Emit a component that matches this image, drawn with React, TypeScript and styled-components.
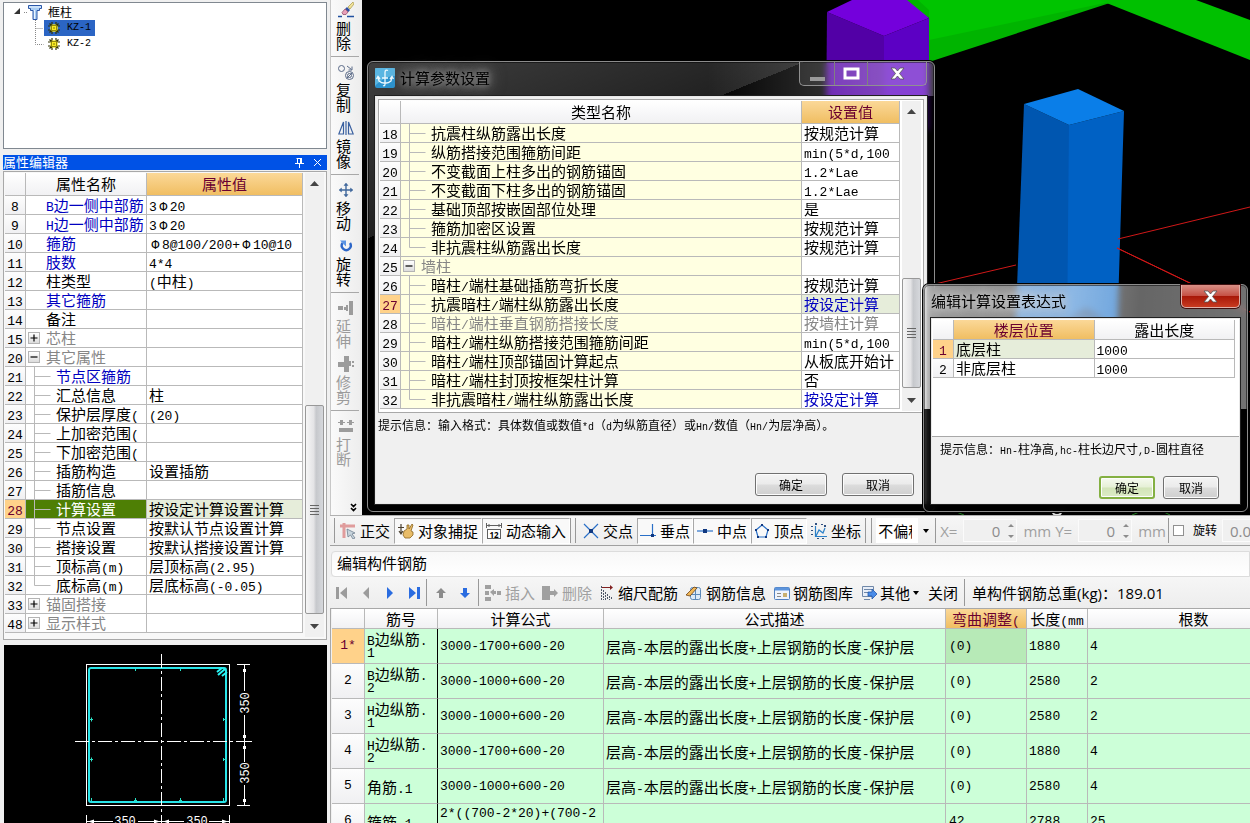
import React, { useState } from "react";
import styled, { createGlobalStyle, css } from "styled-components";

const SONG = `"Noto Sans CJK SC", sans-serif`;
const MONO = `"Liberation Mono", monospace`;
const YAHEI = `"Open Sans", "Noto Sans CJK SC", sans-serif`;
const LINE = "#b9b9b9";

const GlobalStyle = createGlobalStyle`
  *, *::before, *::after { box-sizing: border-box; }
  body { margin: 0; background: #f0f0f0; color: #000; font: 15px/18px ${SONG}; }
  button, input, select { font: inherit; color: inherit; margin: 0; }
`;

/* ---------- text ---------- */

const Latin = styled.span<{ $size: number }>`
  font-family: ${MONO};
  font-size: ${(p) => p.$size}px;
  line-height: 0;
`;

const Rebar = styled.span`
  display: inline-block;
  width: 13px;
  font-family: ${MONO};
  font-size: 13px;
  line-height: 0;
  text-align: center;
`;

const LATIN_SIZE: Record<number, number> = { 15: 13, 13: 11, 12: 10 };

/* Song-style text: ideographs fill the em, Latin letters take half of it. */
function Song({ children, size = 15 }: { children: string; size?: number }) {
  return (
    <>
      {children.split(/([\x20-\x7e]+|Φ)/).map((part, i) => {
        if (!part) return null;
        if (part === "Φ") return <Rebar key={i}>{part}</Rebar>;
        if (i % 2) return <Latin key={i} $size={LATIN_SIZE[size]}>{part}</Latin>;
        return part;
      })}
    </>
  );
}

/* ---------- page frame ---------- */

const Page = styled.div`
  display: flex;
  height: 100vh;
  overflow: hidden;
`;

const LeftDock = styled.aside`
  flex: none;
  display: flex;
  flex-direction: column;
  width: 330px;
  padding: 2px 3px 0 3px;
`;

const Main = styled.main`
  flex: 1;
  min-width: 0;
  display: flex;
  flex-direction: column;
`;

const Workspace = styled.div`
  flex: 1;
  min-height: 0;
  display: flex;
`;

/* ---------- component tree ---------- */

const TreePanel = styled.section`
  flex: none;
  height: 147px;
  padding: 1px 0 0 10px;
  background: #fff;
  border: 1px solid #808890;
  font-size: 12px;
  line-height: 16px;
`;

const TreeRoot = styled.div`
  display: flex;
  align-items: center;
  height: 16px;
`;

const TreeItem = styled.button<{ $selected?: boolean }>`
  display: flex;
  align-items: center;
  gap: 7px;
  width: 51px;
  height: 16px;
  padding: 0 0 0 4px;
  border: 0;
  background: ${(p) => (p.$selected ? "#2b65c4" : "transparent")};
`;

const TreeRow = styled.div`
  display: flex;
  height: 16px;
  padding-left: 21px;
`;

const RootLabel = styled.span`
  padding-left: 6px;
`;

const Gear = () => (
  <svg width="12" height="12" viewBox="0 0 12 12">
    <path d="M4 0v12M8 0v12M0 4h12M0 8h12M1.500 1.500l9 9M10.500 1.500l-9 9" stroke="#333300" strokeWidth="1.200" />
    <circle cx="6" cy="6" r="3.800" fill="#f8ea20" />
    <rect x="3.500" y="3.500" width="5" height="5" fill="none" stroke="#6a6000" strokeWidth=".7" />
    <rect x="5.400" y="5.400" width="1.200" height="1.200" fill="#5a5000" />
  </svg>
);

function ComponentTree() {
  return (
    <TreePanel>
      <TreeRoot>
        <svg width="28" height="16" viewBox="0 0 28 16">
          <path d="M6 4v6H0z" fill="#333" />
          <path d="M10 8.500h4" stroke="#888" strokeDasharray="1 1" />
          <path d="M14.500 1.500h13v3h-2v2h-2.500v9h-4v-9h-2.500v-2h-2z" fill="#a9cdf2" stroke="#2a56a8" />
          <path d="M15 3h12M20.500 6v9" stroke="#eaf4ff" />
        </svg>
        <RootLabel>框柱</RootLabel>
      </TreeRoot>
      {["KZ-1", "KZ-2"].map((name, i) => (
        <TreeRow key={name}>
          <svg width="9" height="16" viewBox="0 0 9 16">
            <path d={i ? "M.5 0v8.500h8" : "M.5 0v16M.5 8.500h8"} fill="none" stroke="#888" strokeDasharray="1 1" />
          </svg>
          <TreeItem type="button" $selected={i === 0}>
            <Gear />
            <Song size={12}>{name}</Song>
          </TreeItem>
        </TreeRow>
      ))}
    </TreePanel>
  );
}

/* ---------- grids ---------- */

const Grid = styled.table`
  flex: 1;
  width: 100%;
  min-width: 0;
  table-layout: fixed;
  border-collapse: separate;
  border-spacing: 0;
  align-self: flex-start;
`;

const HeadCell = styled.th<{ $hot?: boolean; $w?: number; $h?: number }>`
  width: ${(p) => (p.$w ? `${p.$w}px` : "auto")};
  height: ${(p) => p.$h ?? 23}px;
  padding: 0;
  overflow-x: clip;
  white-space: nowrap;
  font-weight: 400;
  text-align: center;
  color: ${(p) => (p.$hot ? "#6a0030" : "#000")};
  background: ${(p) => (p.$hot ? "linear-gradient(#fbd898, #f0be62)" : "linear-gradient(#fff, #f1f1f3)")};
  border-right: 1px solid ${LINE};
  border-bottom: 1px solid ${LINE};
`;

const NumCell = styled.th<{ $active?: boolean }>`
  padding: 0;
  font-weight: 400;
  text-align: center;
  color: ${(p) => (p.$active ? "#6a0030" : "#000")};
  background: ${(p) => (p.$active ? "#ffd28a" : "linear-gradient(#fdfdfd, #f0f0f2)")};
  border-right: 1px solid ${LINE};
  border-bottom: 1px solid ${LINE};
`;

type Tone = "normal" | "blue" | "gray" | "inverse";
const TONES: Record<Tone, string> = { normal: "#000", blue: "#0000c0", gray: "#868686", inverse: "#fff" };

const Cell = styled.td<{ $bg?: string; $tone?: Tone; $pad?: number }>`
  height: 19px;
  padding: 0 0 0 ${(p) => p.$pad ?? 0}px;
  overflow-x: clip;
  white-space: nowrap;
  line-height: 18px;
  color: ${(p) => TONES[p.$tone ?? "normal"]};
  background: ${(p) => p.$bg ?? "#fff"};
  border-right: 1px solid ${LINE};
  border-bottom: 1px solid ${LINE};
`;

const NameLine = styled.div`
  display: flex;
  align-items: center;
  height: 18px;
`;

const NameText = styled.span`
  white-space: nowrap;
`;

const Gutter = styled.svg<{ $leaf?: boolean }>`
  flex: none;
  width: ${(p) => (p.$leaf ? 30 : 20)}px;
  height: 18px;
  overflow: visible;
`;

const ExpandSlot = styled.span`
  flex: none;
  width: 20px;
  padding-left: 2px;
`;

const Expander = styled.button`
  display: block;
  width: 12px;
  height: 12px;
  padding: 0;
  border: 1px solid #b4b4b4;
  background: linear-gradient(#fff, #dcdcdc);
  svg { display: block; }
`;

type Branch = "none" | "mid" | "end" | "plus" | "minus";

function NameContent({ branch, text }: { branch: Branch; text: string }) {
  return (
    <NameLine>
      {branch === "plus" || branch === "minus" ? (
        <ExpandSlot>
          <Expander type="button" aria-label={branch === "plus" ? "展开" : "折叠"}>
            <svg width="10" height="10" viewBox="0 0 10 10">
              <path d={branch === "plus" ? "M1.500 5h7M5 1.500v7" : "M1.500 5h7"} stroke="#000" strokeWidth="1.200" />
            </svg>
          </Expander>
        </ExpandSlot>
      ) : (
        <Gutter $leaf={branch !== "none"}>
          {branch === "mid" && <path d="M8.500 0v19M8.500 9.500h16" stroke={LINE} fill="none" />}
          {branch === "end" && <path d="M8.500 0v9.500h16" stroke={LINE} fill="none" />}
        </Gutter>
      )}
      <NameText>
        <Song>{text}</Song>
      </NameText>
    </NameLine>
  );
}

/* ---------- scroll bar ---------- */

const Track = styled.div`
  flex: none;
  display: flex;
  flex-direction: column;
  width: 19px;
  margin: 0 2px;
  background: #f0f0f0;
`;

const ArrowButton = styled.button`
  flex: none;
  display: grid;
  place-items: center;
  height: 21px;
  padding: 0;
  border: 0;
  background: none;
`;

const TrackSpace = styled.div<{ $grow: number }>`
  flex: ${(p) => p.$grow} 0 0;
`;

const Thumb = styled.div<{ $grow: number }>`
  flex: ${(p) => p.$grow} 0 0;
  display: grid;
  place-items: center;
  border: 1px solid #989898;
  border-radius: 2px;
  background: linear-gradient(90deg, #f6f6f6, #e4e4e6 45%, #c6c8cc 60%, #d6d8dc);
`;

const Tri = ({ down }: { down?: boolean }) => (
  <svg width="9" height="5" viewBox="0 0 9 5">
    <path d={down ? "M0 0h9L4.500 5z" : "M0 5h9L4.500 0z"} fill="#444" />
  </svg>
);

function ScrollBar({ before, size, after }: { before: number; size: number; after: number }) {
  return (
    <Track>
      <ArrowButton type="button" aria-label="向上"><Tri /></ArrowButton>
      <TrackSpace $grow={before} />
      <Thumb $grow={size}>
        <svg width="9" height="11" viewBox="0 0 9 11">
          <path d="M0 1.500h9M0 4.500h9M0 7.500h9M0 10.500h9" stroke="#666" />
        </svg>
      </Thumb>
      <TrackSpace $grow={after} />
      <ArrowButton type="button" aria-label="向下"><Tri down /></ArrowButton>
    </Track>
  );
}

/* ---------- property editor ---------- */

const PropTitle = styled.header`
  flex: none;
  display: flex;
  height: 15px;
  margin-top: 6px;
  padding-right: 1px;
  background: #0052e6;
  color: #fff;
  font-size: 13px;
  line-height: 13px;
`;

const TitleText = styled.h2`
  flex: 1;
  margin: 0;
  font: inherit;
`;

const BareButton = styled.button`
  display: grid;
  place-items: center;
  width: 18px;
  padding: 0;
  border: 0;
  background: none;
`;

const GridBox = styled.div`
  flex: none;
  display: flex;
  padding: 1px 0 1px 1px;
  border: 1px solid #a8a8a8;
  background: #fff;
  table { margin-bottom: 2px; }
`;

const PropBox = styled(GridBox)`
  margin-top: 1px;
  padding-bottom: 2px;
  background: #f8f8f8;
  table { margin-bottom: 4px; }
`;

type Row = [num: string, branch: Branch, name: string, value: string, tone?: Tone, valueTone?: Tone];

const PROPS: Row[] = [
  ["8", "none", "B边一侧中部筋", "3Φ20", "blue"],
  ["9", "none", "H边一侧中部筋", "3Φ20", "blue"],
  ["10", "none", "箍筋", "Φ8@100/200+Φ10@10", "blue"],
  ["11", "none", "肢数", "4*4", "blue"],
  ["12", "none", "柱类型", "(中柱)"],
  ["13", "none", "其它箍筋", "", "blue"],
  ["14", "none", "备注", ""],
  ["15", "plus", "芯柱", "", "gray"],
  ["20", "minus", "其它属性", "", "gray"],
  ["21", "mid", "节点区箍筋", "", "blue"],
  ["22", "mid", "汇总信息", "柱"],
  ["23", "mid", "保护层厚度(", "(20)"],
  ["24", "mid", "上加密范围(", ""],
  ["25", "mid", "下加密范围(", ""],
  ["26", "mid", "插筋构造", "设置插筋"],
  ["27", "mid", "插筋信息", ""],
  ["28", "mid", "计算设置", "按设定计算设置计算"],
  ["29", "mid", "节点设置", "按默认节点设置计算"],
  ["30", "mid", "搭接设置", "按默认搭接设置计算"],
  ["31", "mid", "顶标高(m)", "层顶标高(2.95)"],
  ["32", "end", "底标高(m)", "层底标高(-0.05)"],
  ["33", "plus", "锚固搭接", "", "gray"],
  ["48", "plus", "显示样式", "", "gray"],
];

function PropertyEditor() {
  const [active, setActive] = useState("28");
  return (
    <>
      <PropTitle>
        <TitleText>属性编辑器</TitleText>
        <BareButton type="button" aria-label="固定">
          <svg width="9" height="11" viewBox="0 0 9 11">
            <path d="M2.500 1v5M1.500 1.500h5M0 6.500h9M4.500 7v4" stroke="#fff" />
            <path d="M6 1v5" stroke="#fff" strokeWidth="2" />
          </svg>
        </BareButton>
        <BareButton type="button" aria-label="关闭">
          <svg width="9" height="9" viewBox="0 0 9 9">
            <path d="M1 1l7 7M8 1l-7 7" stroke="#fff" />
          </svg>
        </BareButton>
      </PropTitle>
      <PropBox>
        <Grid>
          <thead>
            <tr>
              <HeadCell $w={21} aria-label="序号" />
              <HeadCell $w={121}>属性名称</HeadCell>
              <HeadCell $hot>属性值</HeadCell>
            </tr>
          </thead>
          <tbody>
            {PROPS.map(([num, branch, name, value, tone]) => {
              const on = num === active;
              return (
                <tr key={num} onClick={() => setActive(num)}>
                  <NumCell $active={on}><Song>{num}</Song></NumCell>
                  <Cell $tone={on ? "inverse" : tone} $bg={on ? "#4e7f05" : undefined}>
                    <NameContent branch={branch} text={name} />
                  </Cell>
                  <Cell $pad={2} $bg={on ? "#e6edda" : undefined}><Song>{value}</Song></Cell>
                </tr>
              );
            })}
          </tbody>
        </Grid>
        <ScrollBar before={214} size={209} after={2} />
      </PropBox>
    </>
  );
}

/* ---------- section preview ---------- */

const Preview = styled.div`
  flex: 1;
  min-height: 0;
  margin: 5px 0 0 1px;
  background: #000;
  overflow: hidden;
  svg { display: block; }
`;

function SectionPreview() {
  const stroke = { stroke: "#fff", fill: "none" };
  const label = { fill: "#fff", fontSize: 12, fontFamily: "Liberation Mono", textAnchor: "middle" as const };
  return (
    <Preview>
      <svg width="100%" height="178">
        <rect x="82.500" y="19.500" width="143" height="141" {...stroke} />
        <rect x="85" y="23" width="137" height="134" rx="2" fill="none" stroke="#28e4e8" strokeWidth="2" />
        <path d="M213 27l5-4M214 30l7-6M218 31l5-4" stroke="#28f4f4" strokeWidth="2" />
        <path
          d="M131.500 24v2M176.500 24v2M85 74.500h4M85 114.500h4M219 74.500h4M219 114.500h4M131.500 153v4M176.500 153v4M130 155.500h3M175 155.500h3M87.500 72.500v4M87.500 112.500v4M219.500 73v3M219.500 113v3M87.500 153v3M219.500 153v3"
          stroke="#28e4c8"
        />
        <path d="M157.500 9v169M71 96.500h161" {...stroke} strokeDasharray="14 3 3 3" />
        <path d="M233 19.500h13M233 160.500h13M232 96.500h16M240.500 19v27M240.500 70v47M240.500 140v20" {...stroke} />
        <path d="M239 24h3v3h-3zM239 90h3v3h-3zM239 101h3v3h-3zM239 154h3v3h-3z" fill="#fff" />
        <text transform="translate(245 58) rotate(-90)" {...label}>350</text>
        <text transform="translate(245 128) rotate(-90)" {...label}>350</text>
        <path d="M82.500 170v8M225.500 170v8M83 176.500h26M134 176.500h46M205 176.500h20" {...stroke} />
        <path d="M84 176.500l6-2v4zM156 176.500l-6-2v4zM159 176.500l6-2v4zM224 176.500l-6-2v4z" fill="#fff" />
        <text x="121" y="180" {...label}>350</text>
        <text x="193" y="180" {...label}>350</text>
      </svg>
    </Preview>
  );
}

/* ---------- vertical tool strip ---------- */

const ToolStrip = styled.nav`
  flex: none;
  display: flex;
  flex-direction: column;
  width: 32px;
  border-left: 1px solid #c8c8c8;
  background: linear-gradient(90deg, #fafafa, #ededed);
  font-family: ${YAHEI};
`;

const StripButton = styled.button`
  display: flex;
  flex-direction: column;
  align-items: flex-start;
  gap: 3px;
  padding: 2px 0 0 5px;
  border: 0;
  background: none;
  line-height: 15px;
  &:disabled { color: #9b9b9b; }
  svg { margin-left: 2px; flex: none; }
`;

const StripText = styled.span`
  width: 15px;
`;

const StripItem = styled.div<{ $sep?: boolean }>`
  height: ${(p) => (p.$sep ? 62 : 56)}px;
  background: ${(p) => (p.$sep ? "linear-gradient(#a8a8a8, #a8a8a8) 0 56px / 28px 1px no-repeat" : "none")};
`;

const Spacer = styled.span`
  flex: 1;
`;

const StripMore = styled(BareButton)`
  align-self: flex-end;
  height: 15px;
`;

const STRIP: { text: string; sep?: boolean; off?: boolean; icon: React.ReactNode }[] = [
  {
    text: "删除", sep: true,
    icon: (
      <>
        <path d="M15 0l-5 5 2 2 4-5z" fill="#f0e29a" stroke="#a89848" strokeWidth=".7" />
        <path d="M9 5l3 3-1.500 2L7 7z" fill="#3050a0" />
        <path d="M7 7l3 3-2 2.500H5l-1-2z" fill="#e8a0b8" stroke="#8a4060" strokeWidth=".7" />
        <path d="M0 14.500h4M9 14.500h7" stroke="#2050a0" strokeWidth="1.500" />
      </>
    ),
  },
  {
    text: "复制",
    icon: (
      <g fill="none" stroke="#5a6a88">
        <circle cx="3.500" cy="4.500" r="3" />
        <circle cx="11.500" cy="11.500" r="4" />
        <circle cx="11.500" cy="11.500" r="2" />
        <path d="M9 2l4.500 3.500M14 2.500v3.500h-3.500M9 14l5-5" />
      </g>
    ),
  },
  {
    text: "镜像", sep: true,
    icon: (
      <g fill="none" stroke="#3a60a0" strokeWidth="1.200">
        <path d="M5.500 2v12H.8zM10.500 2v12h4.700z" />
        <path d="M8 1v14" />
      </g>
    ),
  },
  {
    text: "移动",
    icon: (
      <g stroke="#40689c" strokeWidth="1.400" fill="#40689c">
        <path d="M8 3v10M3 8h10" />
        <path d="M8 1l2 2.500H6zM8 15l2-2.500H6zM1 8l2.500-2v4zM15 8l-2.500-2v4z" strokeWidth=".5" />
      </g>
    ),
  },
  {
    text: "旋转", sep: true,
    icon: (
      <>
        <path d="M4.500 5a4.500 4.500 0 1 0 7.500 0" fill="none" stroke="#2c66c8" strokeWidth="2.400" />
        <path d="M2 2.500h6v6z" fill="#5a94e4" />
      </>
    ),
  },
  {
    text: "延伸", off: true,
    icon: <path d="M11 1h4v14h-4zM0 6h5v4H0zM6 7h2v3H6zM8 5h2v6H8z" fill="#9c9c9c" />,
  },
  {
    text: "修剪", off: true, sep: true,
    icon: <path d="M6 0h5v5h2v5h-2v6H6v-5H0V6h6zM14 5h2v2h-2zM14 9h2v2h-2z" fill="#9c9c9c" />,
  },
  {
    text: "打断", off: true,
    icon: <path d="M0 4h2V2h3v5H2V5H0zM16 4h-2V2h-3v5h3V5h2zM5 4h2v1H5zM9 4h2v1H9zM1 10h14v4H1z" fill="#9c9c9c" />,
  },
];

function VerticalTools() {
  return (
    <ToolStrip>
      {STRIP.map((t) => (
        <StripItem key={t.text} $sep={t.sep}>
          <StripButton type="button" disabled={t.off}>
            <svg width="16" height="16" viewBox="0 0 16 16">{t.icon}</svg>
            <StripText>{t.text}</StripText>
          </StripButton>
        </StripItem>
      ))}
      <Spacer />
      <StripMore type="button" aria-label="更多">
        <svg width="7" height="9" viewBox="0 0 7 9">
          <path d="M1 1l2.500 2.500L6 1M1 5l2.500 2.500L6 5" fill="none" stroke="#000" strokeWidth="1.600" />
        </svg>
      </StripMore>
    </ToolStrip>
  );
}

/* ---------- 3D view ---------- */

const Viewport = styled.div`
  flex: 1;
  min-width: 0;
  position: relative;
  overflow: hidden;
  background: #000;
`;

const Scene = styled.svg`
  display: block;
  width: 100%;
  height: 100%;
`;

const ModelScene = () => (
  <Scene>
    <path d="M536 0H757L567 62V18z" fill="#00b400" />
    <path d="M556 0H757L567 40V10z" fill="#00c400" />
    <path d="M737 0H834L888 20V60z" fill="#00c000" />
    <path d="M465 12L522 36V130H464z" fill="#5200a6" />
    <path d="M522 36L567 18V130H522z" fill="#5c00c4" />
    <path d="M465 12L490 0H545L567 18 522 36z" fill="#7400dc" />
    <path d="M662 104L707 125V340H653z" fill="#0056b0" />
    <path d="M707 125L762 111 755 340H705z" fill="#0061c4" />
    <path d="M662 104L716 89 762 111 707 125z" fill="#0a7ee8" />
    <path d="M704 320L724 307 744 320z" fill="#003c80" />
    <path d="M756 239L888 207M573 284L654 265M755 248L830 284M755 248L888 312" stroke="#d01818" fill="none" />
    <path d="M690 510a5 5 0 0 0 10 0" stroke="#ddd" fill="none" strokeWidth="2" />
    <path d="M592 511l10 4M770 515l10-4M800 511l8 4" stroke="#1c7c1c" />
  </Scene>
);

/* ---------- dialogs ---------- */

const Win = styled.section<{ $x: number; $y: number; $w: number; $light?: boolean }>`
  position: absolute;
  left: ${(p) => p.$x}px;
  top: ${(p) => p.$y}px;
  width: ${(p) => p.$w}px;
  padding: 0 7px 7px;
  border: 1px solid #8c8c8c;
  border-radius: 6px;
  backdrop-filter: blur(3px);
  box-shadow: 0 0 0 1px #000, inset 0 0 0 1px rgba(0, 0, 0, 0.5);
  ${(p) =>
    p.$light
      ? css`
          background: linear-gradient(95deg, rgba(255, 255, 255, 0.6) 0, rgba(255, 255, 255, 0.55) 45%, rgba(255, 255, 255, 0.4) 65%, rgba(255, 255, 255, 0.45) 100%) 0 0 / 100% 55% no-repeat,
            linear-gradient(transparent 55%, rgba(0, 0, 0, 0.75) 55%);
        `
      : css`
          background: linear-gradient(158deg, rgba(255, 255, 255, 0.25) 0, rgba(255, 255, 255, 0.13) 26%, rgba(255, 255, 255, 0) 26%) 0 0 / 100% 100% no-repeat,
            linear-gradient(90deg, transparent 60%, rgba(255, 255, 255, 0.25) 90%) 0 0 / 100% 34px no-repeat,
            linear-gradient(transparent 0, transparent 34px, rgba(0, 0, 0, 0.6) 34px);
        `}
`;

const WinTitle = styled.header<{ $h: number }>`
  display: flex;
  align-items: flex-start;
  height: ${(p) => p.$h}px;
  font-family: ${YAHEI};
`;

const WinName = styled.h1<{ $light?: boolean }>`
  flex: 1;
  margin: 0;
  padding-left: ${(p) => (p.$light ? 0 : 5)}px;
  font: inherit;
  line-height: 32px;
  text-shadow: ${(p) =>
    p.$light
      ? "0 0 8px #dcdcdc, 0 0 12px #dcdcdc"
      : "0 0 6px #888, 0 0 10px #888, 0 0 14px #808080, 0 0 18px #777"};
`;

const AppIcon = styled.svg`
  flex: none;
  margin-top: 6px;
`;

const CaptionButtons = styled.div`
  display: flex;
  height: 24px;
  border: 1px solid #909090;
  border-top: 0;
  border-radius: 0 0 5px 5px;
`;

const CaptionButton = styled.button<{ $w: number }>`
  display: grid;
  place-items: center;
  width: ${(p) => p.$w}px;
  padding: 0;
  border: 0;
  border-right: 1px solid #808080;
  background: rgba(255, 255, 255, 0.08);
  &:last-child { border-right: 0; }
`;

const RedClose = styled.button`
  display: grid;
  place-items: center;
  width: 59px;
  height: 23px;
  padding: 0;
  border: 1px solid #e0b0a8;
  border-top: 0;
  border-radius: 0 0 5px 5px;
  background: linear-gradient(#d99086, #c65246 48%, #a81808 52%, #c83a20);
  box-shadow: 0 0 0 1px #401010;
`;

const Client = styled.div<{ $pad?: number }>`
  padding: ${(p) => p.$pad ?? 0}px;
  border: 1px solid #e8e8e8;
  background: #f0f0f0;
  box-shadow: 0 0 0 1px #202020;
`;

const Hint = styled.p<{ $x?: number }>`
  margin: 0;
  padding: 3px 0 0 ${(p) => p.$x ?? 0}px;
  font-size: 12px;
  line-height: 18px;
`;

const Actions = styled.div<{ $gap: number; $right: number; $top: number; $bottom: number }>`
  display: flex;
  justify-content: flex-end;
  gap: ${(p) => p.$gap}px;
  padding: ${(p) => `${p.$top}px ${p.$right}px ${p.$bottom}px 0`};
`;

const PushButton = styled.button<{ $w: number; $primary?: boolean }>`
  width: ${(p) => p.$w}px;
  height: 23px;
  padding: 0;
  border: 1px solid #707070;
  border-radius: 3px;
  background: linear-gradient(#f4f4f4, #ebebeb 48%, #dcdcdc 52%, #cfcfcf);
  box-shadow: inset 0 0 0 1px #fcfcfc;
  font-size: 12px;
  line-height: 18px;
  ${(p) =>
    p.$primary &&
    css`
      border: 2px solid #84b042;
      background: linear-gradient(#f6faf0, #e6f0d6 48%, #d2e4b8 52%, #dcecc6);
    `}
`;

const CloseX = () => (
  <svg width="15" height="13" viewBox="0 0 15 13">
    <path d="M1 1h4l2.500 3L10 1h4L9.500 6.500 14 12h-4L7.500 9 5 12H1l4.500-5.500z" fill="#fff" stroke="#555" strokeWidth=".8" />
  </svg>
);

const SETTINGS: Row[] = [
  ["18", "mid", "抗震柱纵筋露出长度", "按规范计算"],
  ["19", "mid", "纵筋搭接范围箍筋间距", "min(5*d,100"],
  ["20", "mid", "不变截面上柱多出的钢筋锚固", "1.2*Lae"],
  ["21", "mid", "不变截面下柱多出的钢筋锚固", "1.2*Lae"],
  ["22", "mid", "基础顶部按嵌固部位处理", "是"],
  ["23", "mid", "箍筋加密区设置", "按规范计算"],
  ["24", "end", "非抗震柱纵筋露出长度", "按规范计算"],
  ["25", "minus", "墙柱", "", "gray"],
  ["26", "mid", "暗柱/端柱基础插筋弯折长度", "按规范计算"],
  ["27", "mid", "抗震暗柱/端柱纵筋露出长度", "按设定计算", "normal", "blue"],
  ["28", "mid", "暗柱/端柱垂直钢筋搭接长度", "按墙柱计算", "gray", "gray"],
  ["29", "mid", "暗柱/端柱纵筋搭接范围箍筋间距", "min(5*d,100"],
  ["30", "mid", "暗柱/端柱顶部锚固计算起点", "从板底开始计"],
  ["31", "mid", "暗柱/端柱封顶按框架柱计算", "否"],
  ["32", "end", "非抗震暗柱/端柱纵筋露出长度", "按设定计算", "normal", "blue"],
];

function SettingsDialog() {
  const [active, setActive] = useState("27");
  return (
    <Win $x={5} $y={61} $w={568} role="dialog" aria-label="计算参数设置">
      <WinTitle $h={34}>
        <AppIcon width="20" height="20" viewBox="0 0 20 20">
          <rect width="20" height="20" rx="2" fill="#2b93cf" />
          <path d="M0 0h20v8C12 8 6 12 0 18z" fill="#6fc4ea" opacity=".7" />
          <path d="M13 2.500c-2-1-3 0-3 2v11.500c0 2-1 2-2 1.500M3 9l1 4c3 3 9 3 12 0l1-4M1.500 11L3 8.500 5 11M15 11l2-2.500 1.500 2.500M7 10h6" fill="none" stroke="#eefaff" strokeWidth="1.300" />
        </AppIcon>
        <WinName>计算参数设置</WinName>
        <CaptionButtons>
          <CaptionButton $w={35} type="button" aria-label="最小化">
            <svg width="17" height="15" viewBox="0 0 17 15"><path d="M1 11h15v4H1z" fill="#9a9a9a" /></svg>
          </CaptionButton>
          <CaptionButton $w={33} type="button" aria-label="最大化">
            <svg width="17" height="13" viewBox="0 0 17 13"><rect x="2" y="2" width="13" height="9" fill="none" stroke="#fff" strokeWidth="3" /></svg>
          </CaptionButton>
          <CaptionButton $w={58} type="button" aria-label="关闭"><CloseX /></CaptionButton>
        </CaptionButtons>
      </WinTitle>
      <Client $pad={2}>
        <GridBox>
          <Grid>
            <thead>
              <tr>
                <HeadCell $w={21} aria-label="序号" />
                <HeadCell>类型名称</HeadCell>
                <HeadCell $w={98} $hot>设置值</HeadCell>
              </tr>
            </thead>
            <tbody>
              {SETTINGS.map(([num, branch, name, value, tone, vTone]) => (
                <tr key={num} onClick={() => setActive(num)}>
                  <NumCell $active={num === active}><Song>{num}</Song></NumCell>
                  <Cell $bg="#ffffe1" $tone={tone}><NameContent branch={branch} text={name} /></Cell>
                  <Cell $pad={2} $tone={vTone} $bg={num === active ? "#e6edda" : undefined}><Song>{value}</Song></Cell>
                </tr>
              ))}
            </tbody>
          </Grid>
          <ScrollBar before={160} size={111} after={2} />
        </GridBox>
        <Hint><Song size={12}>提示信息：输入格式：具体数值或数值*d（d为纵筋直径）或Hn/数值（Hn/为层净高）。</Song></Hint>
        <Actions $gap={15} $right={10} $top={39} $bottom={5}>
          <PushButton $w={72} type="button">确定</PushButton>
          <PushButton $w={72} type="button">取消</PushButton>
        </Actions>
      </Client>
    </Win>
  );
}

const PlainGridBox = styled(GridBox)`
  height: 118px;
  padding: 1px 4px 0 1px;
  border-width: 0 0 1px;
`;

function ExpressionDialog() {
  return (
    <Win $x={561} $y={284} $w={325} $light role="dialog" aria-label="编辑计算设置表达式">
      <WinTitle $h={33}>
        <WinName $light>编辑计算设置表达式</WinName>
        <RedClose type="button" aria-label="关闭"><CloseX /></RedClose>
      </WinTitle>
      <Client>
        <PlainGridBox>
          <Grid>
            <thead>
              <tr>
                <HeadCell $w={21} $h={20} aria-label="序号" />
                <HeadCell $h={20} $hot>楼层位置</HeadCell>
                <HeadCell $h={20}>露出长度</HeadCell>
              </tr>
            </thead>
            <tbody>
              {["底层柱", "非底层柱"].map((name, i) => (
                <tr key={name}>
                  <NumCell $active={i === 0}><Song>{`${i + 1}`}</Song></NumCell>
                  <Cell $pad={2} $bg={i ? undefined : "#e6edda"}>{name}</Cell>
                  <Cell $pad={2}><Song>1000</Song></Cell>
                </tr>
              ))}
            </tbody>
          </Grid>
        </PlainGridBox>
        <Hint $x={8}><Song size={12}>提示信息：Hn-柱净高,hc-柱长边尺寸,D-圆柱直径</Song></Hint>
        <Actions $gap={8} $right={20} $top={18} $bottom={4}>
          <PushButton $w={56} $primary type="button">确定</PushButton>
          <PushButton $w={56} type="button">取消</PushButton>
        </Actions>
      </Client>
    </Win>
  );
}

/* ---------- horizontal tool bars ---------- */

const Bar = styled.div<{ $h: number }>`
  flex: none;
  display: flex;
  align-items: center;
  height: ${(p) => p.$h}px;
  overflow: hidden;
  white-space: nowrap;
  background: linear-gradient(#f6f6f6, #ededed);
  font-family: ${YAHEI};
`;

const SnapBar = styled(Bar)`
  border-top: 1px solid #b0b0b0;
  border-bottom: 1px solid #a0a0a0;
`;

const Divider = styled.span<{ $l?: number; $r?: number }>`
  flex: none;
  align-self: stretch;
  width: 1px;
  margin: 2px ${(p) => p.$r ?? 0}px 2px ${(p) => p.$l ?? 0}px;
  background: #989898;
`;

const BarButton = styled.button<{ $on?: boolean; $pad?: number; $gap?: number }>`
  flex: none;
  display: flex;
  align-items: center;
  gap: ${(p) => p.$gap ?? 4}px;
  height: 26px;
  padding: 0 ${(p) => p.$pad ?? 3}px;
  border: 1px solid;
  border-color: ${(p) => (p.$on ? "#a8a8a8 #fff #fff #a8a8a8" : "transparent")};
  background: ${(p) => (p.$on ? "#f9f9f9" : "none")};
  &:disabled { color: #a0a0a0; }
  svg { flex: none; }
`;

const OffsetSelect = styled.select`
  flex: none;
  width: 56px;
  height: 25px;
  padding: 0 20px 0 2px;
  border: 0;
  appearance: none;
  text-overflow: clip;
  background: linear-gradient(#fff, #fff) 0 0 / 42px 100% no-repeat;
`;

const SelectWrap = styled.span`
  flex: none;
  display: flex;
  align-items: center;
  svg { margin-left: -9px; pointer-events: none; }
`;

const Field = styled.label`
  flex: none;
  display: flex;
  align-items: center;
  gap: 6px;
  margin-left: 4px;
  color: #a0a0a0;
`;

const Spin = styled.span`
  display: flex;
  align-items: center;
  width: 54px;
  height: 23px;
  padding-right: 2px;
  border: 1px solid #fbfbfb;
  background: #f0f0f0;
`;

const SpinInput = styled.input`
  flex: 1;
  width: 0;
  min-width: 0;
  padding: 0;
  border: 0;
  background: none;
  text-align: right;
  margin-right: 8px;
  &:disabled { color: #8c8c8c; }
`;

const CheckField = styled.label`
  flex: none;
  display: flex;
  align-items: center;
  gap: 9px;
  font-size: 12px;
`;

const CheckBox = styled.input`
  appearance: none;
  width: 11px;
  height: 11px;
  border: 1px solid #909090;
  background: #fff;
`;

const AngleInput = styled.input`
  flex: 1 0 60px;
  min-width: 0;
  height: 23px;
  margin-left: 5px;
  padding: 0 0 0 7px;
  border: 1px solid #fbfbfb;
  background: #f0f0f0;
  &:disabled { color: #8c8c8c; }
`;

const SpinArrows = () => (
  <svg width="6" height="14" viewBox="0 0 6 14"><path d="M0 3h6L3 0zM0 11h6l-3 3z" fill="#8c8c8c" /></svg>
);

const Caret = () => (
  <svg width="6" height="4" viewBox="0 0 6 4"><path d="M0 0h6L3 4z" fill="#000" /></svg>
);

const Icon = ({ children, w = 16 }: { children: React.ReactNode; w?: number }) => (
  <svg width={w} height="16" viewBox={`0 0 ${w} 16`}>{children}</svg>
);

function SnapToolbar() {
  return (
    <SnapBar $h={31}>
      <Divider $l={4} $r={1} />
      <BarButton type="button">
        <Icon>
          <path d="M0 3h15M4 0v15" stroke="#e09c9c" strokeWidth="3" />
          <path d="M7 6l8 4-3 1 3 4-2 1-2.500-4L8 14z" fill="#c8d4dc" stroke="#708090" strokeWidth=".8" />
        </Icon>
        正交
      </BarButton>
      <BarButton type="button" $on>
        <Icon>
          <path d="M3 1v10M0 4.500h6M1 8l2 3 2-3" fill="none" stroke="#4a4030" strokeWidth="1.200" />
          <path d="M6 8l3-2V2h2v4l3-5 1 1-2 6 2 1v3l-3 3H7L5 12z" fill="#e8bc68" stroke="#8a6420" strokeWidth=".8" />
        </Icon>
        对象捕捉
      </BarButton>
      <BarButton type="button" $on>
        <Icon>
          <path d="M.5 0v5M15.500 0v5M0 2.500h16M3 1v3M13 1v3" stroke="#606060" />
          <rect x="1.500" y="6.500" width="13" height="9" fill="#fff" stroke="#606060" />
          <text x="8" y="14.500" fontSize="8" fontWeight="700" textAnchor="middle">12</text>
        </Icon>
        动态输入
      </BarButton>
      <Divider $r={4} />
      <Divider $r={3} />
      <BarButton type="button">
        <Icon>
          <path d="M1 1l14 14M15 1L1 15" stroke="#2a70c8" strokeWidth="1.200" />
          <rect x="6" y="6" width="4" height="4" fill="#103880" />
        </Icon>
        交点
      </BarButton>
      <BarButton type="button" $on $pad={2}>
        <Icon>
          <path d="M0 12.500h16M12.500 1v12" stroke="#2a70c8" strokeWidth="1.200" />
          <rect x="11" y="11" width="3" height="3" fill="#103880" />
        </Icon>
        垂点
      </BarButton>
      <BarButton type="button" $on>
        <Icon>
          <path d="M0 8h16" stroke="#2a70c8" strokeWidth="1.200" />
          <rect x="6" y="6" width="4" height="4" fill="#103880" />
        </Icon>
        中点
      </BarButton>
      <BarButton type="button" $on $pad={2}>
        <Icon>
          <path d="M8 2l6 5-2 7H4L2 7z" fill="none" stroke="#2a70c8" strokeWidth="1.200" />
          <path d="M7 1h2v2H7zM13 6h2v2h-2zM11 13h2v2h-2zM3 13h2v2H3zM1 6h2v2H1z" fill="#103880" />
        </Icon>
        顶点
      </BarButton>
      <BarButton type="button">
        <Icon>
          <path d="M4.500 3v10.500H16M5 13l3-6 4 3 2-5" fill="none" stroke="#2a80c8" strokeWidth="1.200" />
          <path d="M0 3h2v1H0zM0 7h2v1H0zM0 11h2v1H0zM4 0h2v2H4zM10 1h2v1h-2zM13 2h2v2h-2zM6 15h2v1H6zM11 15h2v1h-2z" fill="#305080" />
        </Icon>
        坐标
      </BarButton>
      <Divider $r={5} />
      <Divider $r={4} />
      <SelectWrap>
        <OffsetSelect aria-label="偏移方式"><option>不偏移</option></OffsetSelect>
        <Caret />
      </SelectWrap>
      <Divider $l={6} />
      <Field>
        X=
        <Spin><SpinInput disabled defaultValue="0" /><SpinArrows /></Spin>
        mm
      </Field>
      <Field>
        Y=
        <Spin><SpinInput disabled defaultValue="0" /><SpinArrows /></Spin>
        mm
      </Field>
      <Divider $l={2} $r={4} />
      <CheckField><CheckBox type="checkbox" />旋转</CheckField>
      <AngleInput disabled defaultValue="0.0" aria-label="旋转角度" />
    </SnapBar>
  );
}

const PanelTitle = styled.h2`
  flex: none;
  height: 26px;
  margin: 5px 0 0 1px;
  padding-left: 5px;
  border: 1px solid #dcdcdc;
  border-radius: 4px 0 0 4px;
  background: linear-gradient(#f8f8f8, #fff);
  font: inherit;
  line-height: 22px;
`;

const Weight = styled.span`
  flex: none;
`;

const NavButton = styled(BareButton)`
  flex: none;
  width: 24px;
  height: 24px;
`;

const NAV: [string, string, string][] = [
  ["首条", "M1 1h3v12H1zM12 1v12L5 7z", "#9c9c9c"],
  ["上一条", "M10 1v12L4 7z", "#9c9c9c"],
  ["下一条", "M4 1v12l6-6z", "#2a6ce0"],
  ["末条", "M2 1v12l7-6zM10 1h3v12h-3z", "#2a6ce0"],
];

const ARROWS: [string, string, string][] = [
  ["上移", "M7 2l5 5H9v5H5V7H2z", "#8c8c8c"],
  ["下移", "M7 12l5-5H9V2H5v5H2z", "#2a6ce0"],
];

const renderNav = ([label, d, fill]: [string, string, string]) => (
  <NavButton key={label} type="button" aria-label={label}>
    <svg width="14" height="14" viewBox="0 0 14 14"><path d={d} fill={fill} /></svg>
  </NavButton>
);

function RebarToolbar() {
  return (
    <Bar $h={31}>
      {NAV.map(renderNav)}
      <Divider $r={2} />
      {ARROWS.map(renderNav)}
      <Divider $l={1} $r={2} />
      <BarButton type="button" disabled>
        <Icon><path d="M0 0h6v4H0zM0 6h4v4H0zM0 12h6v4H0zM5 7l4-3v2h2v3H9v2zM12 6h4v4h-4z" fill="#a0a0a0" /></Icon>
        插入
      </BarButton>
      <BarButton type="button" disabled $pad={2}>
        <Icon><path d="M0 1h8v14H0zM8 6h4V4l4 4-4 4v-2H8z" fill="#a0a0a0" /></Icon>
        删除
      </BarButton>
      <BarButton type="button">
        <Icon w={15}>
          <path d="M2.500 1v14M4.500 5v10M6.500 7v8M8.500 9v6M10.500 11v4M12.500 12v3" stroke="#505868" strokeDasharray="2 1" />
          <path d="M3 2.500h9" stroke="#802020" />
          <path d="M11 0l3 2.500L11 5z" fill="#802020" />
        </Icon>
        缩尺配筋
      </BarButton>
      <BarButton type="button">
        <Icon>
          <rect x="4.500" y="2.500" width="10" height="12" rx="2" fill="#dceaf8" stroke="#5a88b8" />
          <path d="M9.500 3v11M5 9.500h9" stroke="#5a88b8" />
          <path d="M0 10l8-8 3 1-7 8z" fill="#f0b858" stroke="#704010" strokeWidth=".8" />
        </Icon>
        钢筋信息
      </BarButton>
      <BarButton type="button" $gap={3}>
        <Icon>
          <rect x=".5" y="2.500" width="15" height="12" rx="1" fill="#eef4fc" stroke="#5080c0" />
          <path d="M1 4h14" stroke="#5c94dc" strokeWidth="3" />
          <path d="M3 8.500h4M3 11.500h4" stroke="#888" />
          <rect x="9" y="8" width="4" height="4" fill="#c8b070" />
        </Icon>
        钢筋图库
      </BarButton>
      <BarButton type="button" $gap={3}>
        <Icon>
          <path d="M1.500 1.500h11v10h-11zM3 4.500h8M3 7.500h4" fill="#e8eef8" stroke="#7088a8" />
          <path d="M3 14.500h6" stroke="#7088a8" />
          <path d="M7 7h4V4l5 5-5 5v-3H7z" fill="#4a8ce8" stroke="#2458a8" strokeWidth=".8" />
        </Icon>
        其他
        <Caret />
      </BarButton>
      <BarButton type="button" $pad={4}>关闭</BarButton>
      <Divider $l={1} $r={7} />
      <Weight>单构件钢筋总重(kg)：189.01</Weight>
    </Bar>
  );
}

/* ---------- rebar table ---------- */

const RebarBox = styled.div`
  flex: none;
  height: 215px;
  padding-left: 1px;
  overflow: hidden;
  border-top: 1px solid #a8a8a8;
  border-left: 1px solid #a8a8a8;
`;

const RebarGrid = styled(Grid)`
  min-width: 968px;
`;

const RebarNum = styled(NumCell)`
  font-family: ${MONO};
  font-size: 13px;
`;

const RebarCell = styled.td<{ $hot?: boolean; $strong?: boolean; $pad?: number }>`
  height: 35px;
  padding: 0 0 0 ${(p) => p.$pad ?? 2}px;
  overflow-x: clip;
  line-height: 15px;
  white-space: nowrap;
  background: ${(p) => (p.$hot ? "#b7eab7" : "#ccffd8")};
  border-right: 1px solid ${(p) => (p.$strong ? "#000" : LINE)};
  border-bottom: 1px solid ${LINE};
`;

const TextLine = styled.div<{ $latin: boolean }>`
  ${(p) => p.$latin && css`font-family: ${MONO}; font-size: 13px;`}
`;

const DESC = "层高-本层的露出长度+上层钢筋的长度-保护层";
const REBARS: string[][] = [
  ["1*", "B边纵筋.|1", "3000-1700+600-20", DESC, "(0)", "1880", "4"],
  ["2", "B边纵筋.|2", "3000-1000+600-20", DESC, "(0)", "2580", "2"],
  ["3", "H边纵筋.|1", "3000-1000+600-20", DESC, "(0)", "2580", "2"],
  ["4", "H边纵筋.|2", "3000-1700+600-20", DESC, "(0)", "1880", "4"],
  ["5", "角筋.1", "3000-1000+600-20", DESC, "(0)", "2580", "4"],
  ["6", "箍筋.1", "2*((700-2*20)+(700-2|*20))+2*(11.9*d)", "", "42", "2788", "25"],
];

const Lines = ({ text }: { text: string }) => (
  <>
    {text.split("|").map((l) => (
      <TextLine key={l} $latin={/^[\x20-\x7e]*$/.test(l)}><Song>{l}</Song></TextLine>
    ))}
  </>
);

function RebarTable() {
  return (
    <RebarBox>
      <RebarGrid>
        <thead>
          <tr>
            <HeadCell $w={33} $h={20} aria-label="序号" />
            <HeadCell $w={73} $h={20}>筋号</HeadCell>
            <HeadCell $w={166} $h={20}>计算公式</HeadCell>
            <HeadCell $w={342} $h={20}>公式描述</HeadCell>
            <HeadCell $w={81} $h={20} $hot><Song>弯曲调整(</Song></HeadCell>
            <HeadCell $w={61} $h={20}><Song>长度(mm</Song></HeadCell>
            <HeadCell $h={20}>根数</HeadCell>
          </tr>
        </thead>
        <tbody>
          {REBARS.map(([num, name, formula, desc, bend, len, count], i) => (
            <tr key={num}>
              <RebarNum $active={i === 0}>{num}</RebarNum>
              <RebarCell $strong><Lines text={name} /></RebarCell>
              <RebarCell><Lines text={formula} /></RebarCell>
              <RebarCell><Lines text={desc} /></RebarCell>
              <RebarCell $hot={i === 0} $pad={3}><Lines text={bend} /></RebarCell>
              <RebarCell><Lines text={len} /></RebarCell>
              <RebarCell><Lines text={count} /></RebarCell>
            </tr>
          ))}
        </tbody>
      </RebarGrid>
    </RebarBox>
  );
}

export default function App() {
  return (
    <>
      <GlobalStyle />
      <Page>
        <LeftDock>
          <ComponentTree />
          <PropertyEditor />
          <SectionPreview />
        </LeftDock>
        <Main>
          <Workspace>
            <VerticalTools />
            <Viewport>
              <ModelScene />
              <SettingsDialog />
              <ExpressionDialog />
            </Viewport>
          </Workspace>
          <SnapToolbar />
          <PanelTitle>编辑构件钢筋</PanelTitle>
          <RebarToolbar />
          <RebarTable />
        </Main>
      </Page>
    </>
  );
}
